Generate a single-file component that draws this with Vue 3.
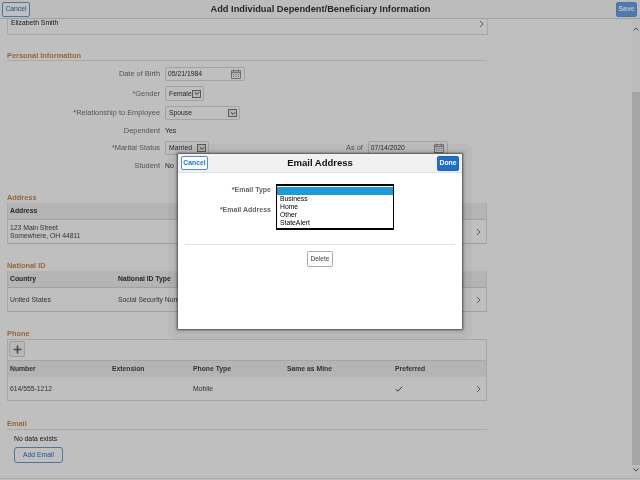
<script setup>
const addressCols = ['Address']
const phoneHead = [
  { t: 'Number', w: 102 }, { t: 'Extension', w: 81 }, { t: 'Phone Type', w: 94 },
  { t: 'Same as Mine', w: 108 }, { t: 'Preferred', w: 80 }
]
const emailTypes = ['Business', 'Home', 'Other', 'StateAlert']
</script>

<template>
  <div class="page">
    <header class="topbar">
      <button class="btn ghost top-cancel">Cancel</button>
      <h1 class="title">Add Individual Dependent/Beneficiary Information</h1>
      <button class="btn primary save">Save</button>
    </header>

    <div class="body">
      <main class="content">
        <div class="name-card">
          <span>Elizabeth Smith</span>
          <svg class="chev" viewBox="0 0 5 8"><path d="M1 1l3 3-3 3" /></svg>
        </div>

        <h2 class="heading lined personal">Personal Information</h2>
        <div class="form">
          <div class="row h14"><label>Date of Birth</label>
            <div class="field date">05/21/1984
              <svg class="cal" viewBox="0 0 11 11"><path d="M.5 2h10v8.500H.5zM.5 4h10M3 .5v2.500M8 .5v2.500" /><path class="dots" d="M2.500 6h1M5 6h1M7.500 6h1M2.500 8h1M5 8h1M7.500 8h1" /></svg>
            </div>
          </div>
          <div class="row h15"><label>*Gender</label>
            <div class="field sel w-gender">Female<span class="arrow"><svg viewBox="0 0 7 5"><path d="M1 1l2.500 2.500L6 1" /></svg></span></div>
          </div>
          <div class="row h14"><label>*Relationship to Employee</label>
            <div class="field sel w-rel">Spouse<span class="arrow"><svg viewBox="0 0 7 5"><path d="M1 1l2.500 2.500L6 1" /></svg></span></div>
          </div>
          <div class="row h10"><label>Dependent</label><span>Yes</span></div>
          <div class="row h14 marital"><label>*Marital Status</label>
            <div class="field sel w-mar">Married<span class="arrow"><svg viewBox="0 0 7 5"><path d="M1 1l2.500 2.500L6 1" /></svg></span></div>
            <label class="asof">As of</label>
            <div class="field date">07/14/2020
              <svg class="cal" viewBox="0 0 11 11"><path d="M.5 2h10v8.500H.5zM.5 4h10M3 .5v2.500M8 .5v2.500" /><path class="dots" d="M2.500 6h1M5 6h1M7.500 6h1M2.500 8h1M5 8h1M7.500 8h1" /></svg>
            </div>
          </div>
          <div class="row h10"><label>Student</label><span>No</span></div>
        </div>

        <h2 class="heading address">Address</h2>
        <section class="table">
          <div class="thead"><span v-for="c in addressCols" :key="c">{{ c }}</span></div>
          <div class="tbody addr-row">
            <span>123 Main Street<br />Somewhere, OH 44811</span>
            <svg class="chev" viewBox="0 0 5 8"><path d="M1 1l3 3-3 3" /></svg>
          </div>
        </section>

        <h2 class="heading nat">National ID</h2>
        <section class="table">
          <div class="thead"><span class="c-country">Country</span><span>National ID Type</span></div>
          <div class="tbody addr-row">
            <span class="c-country">United States</span><span>Social Security Number</span>
            <svg class="chev" viewBox="0 0 5 8"><path d="M1 1l3 3-3 3" /></svg>
          </div>
        </section>

        <h2 class="heading phone">Phone</h2>
        <section class="table boxed">
          <div class="toolbar">
            <button class="plus"><svg viewBox="0 0 9 9"><path d="M4.500 .5v8M.5 4.500h8" /></svg></button>
          </div>
          <div class="thead ph-head"><span v-for="c in phoneHead" :key="c.t" :style="{ width: c.w + 'px' }">{{ c.t }}</span></div>
          <div class="tbody ph-row">
            <span :style="{ width: '102px' }">614/555-1212</span>
            <span :style="{ width: '81px' }"></span>
            <span :style="{ width: '94px' }">Mobile</span>
            <span :style="{ width: '108px' }"></span>
            <svg class="check" viewBox="0 0 8 6"><path d="M.7 3.200l2 2L7.300.7" /></svg>
            <svg class="chev" viewBox="0 0 5 8"><path d="M1 1l3 3-3 3" /></svg>
          </div>
        </section>

        <h2 class="heading lined email">Email</h2>
        <p class="nodata">No data exists</p>
        <button class="btn ghost add">Add Email</button>
      </main>

      <aside class="scrollbar">
        <svg class="sb-arrow" viewBox="0 0 8 6"><path d="M1.500 4.500L4 2l2.500 2.500" /></svg>
        <div class="sb-gap"></div>
        <div class="sb-thumb"></div>
        <svg class="sb-arrow" viewBox="0 0 8 6"><path d="M1.500 1.500L4 4l2.500-2.500" /></svg>
      </aside>
    </div>
    <div class="foot"></div>

    <div class="overlay"></div>

    <div class="halo-outer">
      <div class="halo-inner">
        <div class="modal">
          <div class="m-head">
            <button class="btn ghost m-cancel">Cancel</button>
            <h2 class="m-title">Email Address</h2>
            <button class="btn primary done">Done</button>
          </div>
          <div class="m-form">
            <div class="m-row"><label>*Email Type</label></div>
            <div class="m-row"><label>*Email Address</label></div>
            <div class="listbox">
              <div class="opt-blank"></div>
              <div v-for="o in emailTypes" :key="o" class="opt">{{ o }}</div>
            </div>
          </div>
          <hr class="m-rule" />
          <button class="btn delete">Delete</button>
        </div>
      </div>
    </div>
  </div>
</template>

<style>
html, body { margin: 0; padding: 0; background: #fff; }
</style>

<style scoped>
.page {
  position: relative;
  width: 640px;
  height: 480px;
  overflow: hidden;
  background: #fff;
  color: #333;
  font-family: "Liberation Sans", Arial, sans-serif;
  font-size: 6.8px;
  line-height: 8px;
  display: flex;
  flex-direction: column;
  filter: blur(.3px);
}
h1, h2, p { margin: 0; }
button { font-family: inherit; padding: 0; cursor: pointer; }

.topbar {
  flex: none;
  height: 18px;
  border-bottom: 1px solid #d4d8e0;
  background: #fbfbfb;
  display: flex;
  align-items: center;
  justify-content: space-between;
  padding: 0 3px 0 2px;
}
.title { font-size: 9.25px; font-weight: bold; color: #333; line-height: 12px; margin-left: -5px; }

.btn { font-size: 6.8px; line-height: 8px; border-radius: 2px; }
.ghost { background: #fff; border: 1px solid #6b9ad6; color: #2a6fc4; font-weight: normal; }
.primary { background: #1f6fc9; border: 1px solid #1b66bb; color: #fff; font-weight: bold; }
.top-cancel { width: 28px; height: 15px; }
.save { width: 21px; height: 15px; background: #67a5ec; border-color: #5f9de4; }

.body { flex: 1; display: flex; min-height: 0; }
.foot { flex: none; height: 1px; background: #e4e4e4; margin-bottom: 1px; }
.content { flex: none; width: 480px; padding-left: 7px; }
.scrollbar { margin-left: auto; width: 8px; background: #fbfbfb; display: flex; flex-direction: column; }
.sb-arrow { width: 8px; height: 6px; flex: none; margin: 7px 0 0; fill: none; stroke: #666; stroke-width: 1; }
.sb-gap { height: 60px; flex: none; }
.sb-thumb { flex: 1; background: #dcdcdc; }
.scrollbar .sb-arrow:last-child { margin: 2px 0 5px; }

.chev { width: 5px; height: 8px; fill: none; stroke: #777; stroke-width: 1; flex: none; }

.name-card {
  height: 15px;
  border: 1px solid #dfe2e6;
  border-top: 0;
  display: flex;
  justify-content: space-between;
  padding: 0 3px;
  width: 473px;
  line-height: 8px;
}
.name-card .chev { margin-top: 1px; }
.name-card span { color: #222; }

.heading { font-size: 7.4px; line-height: 11px; height: 11px; font-weight: bold; color: #c9884f; }
.lined { height: 10px; border-bottom: 1px solid #e0e2e6; line-height: 10px; }
.personal { margin-top: 15px; line-height: 12px; }
.address { margin-top: 22px; }
.nat { margin-top: 16px; }
.phone { margin-top: 16px; }
.email { margin-top: 18px; }

.form { margin-top: 6px; display: flex; flex-direction: column; gap: 5px; }
.row { display: flex; align-items: center; }
.row > label { width: 153px; text-align: right; margin-right: 5px; color: #707070; flex: none; font-size: 7.4px; }
.h14 { height: 14px; }
.h15 { height: 15px; }
.h10 { height: 10px; padding-top: 1px; box-sizing: border-box; }
.marital { margin-top: 1px; }
.row > .asof { width: auto; margin-left: 137px; margin-right: 5px; }

.field {
  position: relative;
  box-sizing: border-box;
  height: 100%;
  border: 1px solid #d6dade;
  border-radius: 2px;
  background: #fff;
  color: #333;
  display: flex;
  align-items: center;
  padding-left: 2px;
  flex: none;
}
.date { width: 80px; justify-content: space-between; padding-right: 3px; }
.sel { padding-left: 3px; justify-content: space-between; padding-right: 2px; }
.w-gender { width: 39px; }
.w-rel { width: 75px; }
.w-mar { width: 44px; }
.cal { width: 10px; height: 10px; fill: none; stroke: #666; stroke-width: .8; }
.cal .dots { stroke-width: 1; }
.arrow {
  width: 9px;
  height: 8px;
  box-sizing: border-box;
  border: 1px solid #777;
  background: #f2f2f2;
  display: flex;
  align-items: center;
  justify-content: center;
  flex: none;
}
.arrow svg { width: 6px; height: 5px; fill: none; stroke: #222; stroke-width: 1; }

.table { width: 480px; box-sizing: border-box; border-left: 1px solid #dfe3e6; border-right: 1px solid #dfe3e6; border-bottom: 1px solid #d5d9dd; }
.thead {
  height: 17px;
  box-sizing: border-box;
  border-bottom: 1px solid #d5d9dd;
  background: #f0f0f0;
  display: flex;
  align-items: center;
  padding-left: 2px;
  font-weight: bold;
  color: #333;
}
.tbody { display: flex; align-items: center; padding-left: 2px; padding-right: 5px; color: #444; }
.addr-row { height: 23px; position: relative; }
.addr-row .chev { margin-left: auto; }
.c-country { width: 108px; flex: none; }
.addr-row span:first-child { line-height: 8px; }

.boxed { border: 1px solid #dcdde6; height: 62px; }
.toolbar { height: 21px; box-sizing: border-box; border-bottom: 1px solid #dcdde6; padding: 1px 0 0 1px; }
.plus {
  display: flex;
  align-items: center;
  justify-content: center;
  width: 16px;
  height: 16px;
  border: 1px solid #d0d4d8;
  border-radius: 2px;
  background: #f6f6f6;
}
.plus svg { width: 9px; height: 9px; fill: none; stroke: #666; stroke-width: 1.7; }
.ph-head { height: 16px; border-bottom: 0; color: #444; }
.ph-head span { flex: none; }
.ph-row { height: 23px; }
.ph-row span { flex: none; }
.check { width: 8px; height: 6px; fill: none; stroke: #444; stroke-width: 1; flex: none; }
.ph-row .chev { margin-left: auto; }

.nodata { margin: 5px 0 0 7px; color: #222; height: 8px; }
.add { display: block; margin: 4px 0 0 7px; width: 49px; height: 16px; font-size: 6.8px; border-radius: 3px; }

.overlay { position: absolute; inset: 0; background: rgba(0, 0, 0, .25); }

.halo-outer {
  position: absolute;
  left: 168px;
  top: 144px;
  padding: 5px;
  border-radius: 7px;
  background: rgba(0, 0, 0, .03);
}
.halo-inner {
  padding: 5px;
  border-radius: 4px;
  background: rgba(0, 0, 0, .03);
}
.modal {
  width: 284px;
  height: 175px;
  background: #fff;
  box-shadow: 0 0 2px 1px rgba(0, 0, 0, .6);
  display: flex;
  flex-direction: column;
  align-items: center;
}
.m-head {
  align-self: stretch;
  height: 18px;
  border-bottom: 1px solid #dfe2e6;
  background: #f1f1f1;
  display: flex;
  align-items: center;
  justify-content: space-between;
  padding: 0 3px;
  flex: none;
}
.m-title { font-size: 9.5px; font-weight: bold; color: #111; line-height: 12px; margin-left: -5px; }
.m-cancel { width: 27px; height: 14px; border-color: #4a90e2; color: #1f6fc9; font-weight: bold; }
.done { width: 22px; height: 15px; background: #1f6fc9; border-color: #1b66bb; }
.m-form { position: relative; align-self: stretch; height: 71px; box-sizing: border-box; padding-top: 13px; display: flex; flex-direction: column; gap: 12px; flex: none; }
.m-row { height: 8px; }
.m-row label { display: block; width: 93px; text-align: right; color: #666; font-weight: bold; font-size: 7px; }
.listbox {
  position: absolute;
  left: 98px;
  top: 11px;
  width: 118px;
  height: 46px;
  box-sizing: border-box;
  border: 1px solid #000;
  border-top-width: 2px;
  border-bottom-width: 2px;
  background: #fff;
  padding-top: 1px;
  color: #000;
}
.opt-blank { height: 8px; background: #1e9ad6; }
.opt { height: 8px; line-height: 8px; padding-left: 3px; }
.m-rule { align-self: stretch; margin: 0 7px; height: 1px; border: 0; background: #e6e6e6; flex: none; }
.delete {
  margin-top: 6px;
  width: 26px;
  height: 16px;
  background: #fff;
  border: 1px solid #aaa;
  color: #444;
  font-weight: normal;
  font-size: 6.6px;
}
</style>
